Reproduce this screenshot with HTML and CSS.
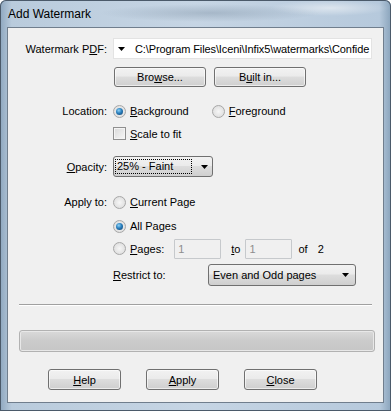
FILE: index.html
```html
<!DOCTYPE html>
<html lang="en">
<head>
  <meta charset="UTF-8">
  <title>Add Watermark</title>
  <link rel="stylesheet" href="styles.css">
</head>
<body>
  <div class="window">
    <div class="titlebar">Add Watermark</div>
    <div class="client">
      <div class="row r-pdf">
        <span class="label">Watermark P<u>D</u>F:</span>
        <div class="combo">
          <svg class="tri" width="8" height="4" viewBox="0 0 8 4"><path d="M0 0H7L3.5 4Z" fill="#000"/></svg>
          <span class="path">C:\Program Files\Iceni\Infix5\watermarks\Confide</span>
        </div>
      </div>
      <div class="row r-btns">
        <span class="label"></span>
        <button class="btn b-browse">Bro<u>w</u>se...</button>
        <button class="btn b-built">B<u>u</u>ilt in...</button>
      </div>
      <div class="row r-loc">
        <span class="label">Location:</span>
        <span class="radio checked"></span><span class="opt"><u>B</u>ackground</span>
        <span class="radio fg"></span><span class="opt"><u>F</u>oreground</span>
      </div>
      <div class="row r-scale">
        <span class="label"></span>
        <span class="check"></span><span class="opt"><u>S</u>cale to fit</span>
      </div>
      <div class="row r-opacity">
        <span class="label"><u>O</u>pacity:</span>
        <div class="select s-opacity">
          <span class="focus">25% - Faint</span>
          <svg class="arrow" width="8" height="4" viewBox="0 0 8 4"><path d="M0 0H7L3.5 4Z" fill="#000"/></svg>
        </div>
      </div>
      <div class="row r-apply">
        <span class="label">Apply to:</span>
        <span class="radio"></span><span class="opt"><u>C</u>urrent Page</span>
      </div>
      <div class="row r-all">
        <span class="label"></span>
        <span class="radio checked"></span><span class="opt">All Pages</span>
      </div>
      <div class="row r-pages">
        <span class="label"></span>
        <span class="radio"></span><span class="opt"><u>P</u>ages:</span>
        <div class="field f-from">1</div>
        <span class="to"><u>t</u>o</span>
        <div class="field f-to">1</div>
        <span class="of">of</span>
        <span class="total">2</span>
      </div>
      <div class="row r-restrict">
        <span class="label"></span>
        <span class="restrict"><u>R</u>estrict to:</span>
        <div class="select s-restrict">
          <span>Even and Odd pages</span>
          <svg class="arrow" width="8" height="4" viewBox="0 0 8 4"><path d="M0 0H7L3.5 4Z" fill="#000"/></svg>
        </div>
      </div>
      <div class="sep"></div>
      <div class="progress"></div>
      <div class="footer">
        <button class="btn b-foot"><u>H</u>elp</button>
        <button class="btn b-foot"><u>A</u>pply</button>
        <button class="btn b-foot"><u>C</u>lose</button>
      </div>
    </div>
  </div>
</body>
</html>
```

FILE: styles.css
```css
body {
  margin: 0;
  font-family: "Liberation Sans", Arial, sans-serif;
  font-size: 11px;
  color: #000;
}
u {
  text-decoration: underline;
  text-underline-offset: 1px;
}
.window {
  width: 391px;
  height: 411px;
  box-sizing: border-box;
  padding: 0 7px 8px;
  background: linear-gradient(90deg, #8ea7bf 0%, #b9cbdc 3%, #c6d5e4 50%, #b6c9dc 97%, #8aa4bc 100%);
  border-radius: 6px 6px 0 0;
  box-shadow: inset 0 0 0 1px #4b5a6a;
  display: flex;
  flex-direction: column;
}
.titlebar {
  height: 27px;
  line-height: 28px;
  font-size: 12px;
  background: radial-gradient(ellipse 110px 9px at 210px 13px, rgba(110,130,150,0.35), transparent),
              radial-gradient(ellipse 60px 8px at 330px 8px, rgba(255,255,255,0.5), transparent);
  margin: 0 -7px;
  padding-left: 8px;
}
.client {
  flex: 1;
  background: #f0f0f0;
  border: 1px solid #707e8d;
  display: flex;
  flex-direction: column;
  overflow: hidden;
}
.row {
  display: flex;
  align-items: center;
}
.label {
  width: 99px;
  text-align: right;
  margin-right: 6px;
  flex-shrink: 0;
}
.r-pdf {
  margin-top: 10px;
  height: 21px;
}
.combo {
  width: 257px;
  height: 19px;
  background: #fff;
  border: 1px solid #e3e3e3;
  display: flex;
  align-items: center;
  overflow: hidden;
  white-space: nowrap;
}
.tri {
  margin: 1px 9px 0 4px;
  flex-shrink: 0;
}
.path {
  letter-spacing: -0.1px;
}
.btn {
  font-family: "Liberation Sans", Arial, sans-serif;
  font-size: 11px;
  color: #000;
  height: 20px;
  padding: 0;
  border: 1px solid #707070;
  border-radius: 3px;
  background: linear-gradient(#f2f2f2 0%, #ebebeb 45%, #dddddd 50%, #cfcfcf 100%);
  box-shadow: inset 0 0 0 1px rgba(255,255,255,0.6);
}
.r-btns {
  margin-top: 8px;
}
.b-browse {
  width: 92px;
  margin-left: 1px;
}
.b-built {
  width: 92px;
  margin-left: 8px;
}
.r-loc {
  margin-top: 17px;
  height: 14px;
}
.radio {
  width: 11px;
  height: 11px;
  border-radius: 50%;
  border: 1px solid #a7a7a7;
  background: radial-gradient(circle at 50% 50%, #f6f6f6 0%, #d8d8d8 100%);
  position: relative;
  flex-shrink: 0;
}
.radio.checked::after {
  content: "";
  position: absolute;
  left: 2px;
  top: 2px;
  width: 7px;
  height: 7px;
  border-radius: 50%;
  background: radial-gradient(circle at 40% 35%, #8fd3f7 0%, #2a7fbd 45%, #0d3a66 100%);
}
.opt {
  margin-left: 4px;
}
.radio.fg {
  margin-left: 23px;
}
.r-scale {
  margin-top: 9px;
  height: 13px;
}
.check {
  width: 11px;
  height: 11px;
  border: 1px solid #8f8f8f;
  background: linear-gradient(135deg, #d9d9d9, #f7f7f7);
  box-shadow: inset 0 0 0 1px #f4f4f4;
  flex-shrink: 0;
}
.select {
  height: 19px;
  border: 1px solid #707070;
  border-radius: 3px;
  background: linear-gradient(#f2f2f2 0%, #ebebeb 45%, #dddddd 50%, #cfcfcf 100%);
  display: flex;
  align-items: center;
}
.r-opacity {
  margin-top: 16px;
  height: 21px;
}
.s-opacity {
  width: 98px;
}
.focus {
  width: 74px;
  margin-left: 2px;
  padding-left: 1px;
  line-height: 13px;
  outline: 1px dotted #000;
}
.s-opacity .arrow {
  margin-left: 10px;
}
.r-apply {
  margin-top: 18px;
  height: 14px;
}
.r-all {
  margin-top: 10px;
  height: 14px;
}
.r-pages {
  margin-top: 5px;
  height: 21px;
}
.field {
  width: 42px;
  height: 18px;
  border: 1px solid #c6c9cc;
  border-radius: 1px;
  color: #8d8d8d;
  padding-left: 3px;
  line-height: 18px;
}
.f-from {
  margin-left: 10px;
}
.to {
  margin-left: 10px;
}
.f-to {
  margin-left: 5px;
}
.of {
  margin-left: 6px;
}
.total {
  margin-left: 10px;
}
.r-restrict {
  margin-top: 5px;
  height: 22px;
}
.restrict {
  width: 95px;
}
.s-restrict {
  width: 146px;
  height: 20px;
}
.s-restrict span {
  margin-left: 4px;
  flex: 1;
}
.s-restrict .arrow {
  margin-right: 5px;
}
.sep {
  margin: 18px 11px 0 11px;
  height: 0;
  border-top: 1px solid #a0a0a0;
  border-bottom: 1px solid #fff;
}
.progress {
  margin: 24px 8px 0 11px;
  height: 20px;
  border: 1px solid #b2b2b2;
  border-radius: 3px;
  background: linear-gradient(#dadada 0%, #cbcbcb 50%, #c6c6c6 100%);
  box-shadow: inset 0 0 0 1px #e8e8e8;
}
.footer {
  margin-top: 17px;
  display: flex;
  padding-left: 40px;
  gap: 25px;
}
.b-foot {
  width: 73px;
  height: 21px;
}
```
